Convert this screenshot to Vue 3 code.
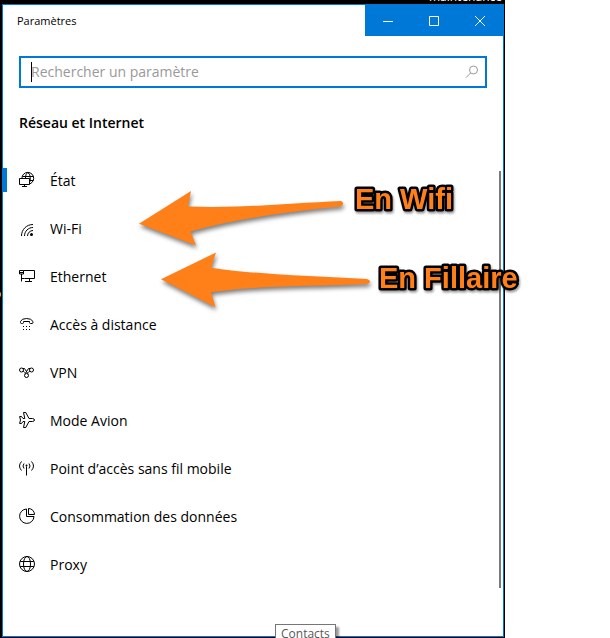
<script setup>
import { ref } from 'vue'

const query = ref('')
const current = ref('etat')
const items = [
  { id: 'etat', label: 'État' },
  { id: 'wifi', label: 'Wi-Fi' },
  { id: 'ethernet', label: 'Ethernet' },
  { id: 'dialup', label: 'Accès à distance' },
  { id: 'vpn', label: 'VPN' },
  { id: 'plane', label: 'Mode Avion' },
  { id: 'hotspot', label: 'Point d’accès sans fil mobile' },
  { id: 'usage', label: 'Consommation des données' },
  { id: 'proxy', label: 'Proxy' },
]
</script>

<template>
  <div class="screen">
    <div class="desktop">
      <span class="behind-top">maintenance</span>
      <span class="behind-left">o</span>
      <main class="window">
        <header class="titlebar">
          <span class="title">Paramètres</span>
          <div class="controls">
            <button type="button" aria-label="Réduire">
              <svg width="12" height="12" viewBox="0 0 12 12"><path d="M1 6.500h10" /></svg>
            </button>
            <button type="button" aria-label="Agrandir">
              <svg width="12" height="12" viewBox="0 0 12 12"><path d="M1.500 1.500h9v9h-9z" /></svg>
            </button>
            <button type="button" aria-label="Fermer">
              <svg width="12" height="12" viewBox="0 0 12 12"><path d="M1 1l10 10M11 1L1 11" /></svg>
            </button>
          </div>
        </header>

        <label class="search">
          <span class="caret"></span>
          <input v-model="query" type="text" placeholder="Rechercher un paramètre" aria-label="Rechercher un paramètre" />
          <svg width="14" height="14" viewBox="0 0 14 14"><circle cx="8.500" cy="5" r="4" /><path d="M5.600 8L1 12.600" /></svg>
        </label>

        <h1>Réseau et Internet</h1>

        <div class="pane">
          <nav>
            <a v-for="item in items" :key="item.id" href="#" :class="{ active: item.id === current }" @click.prevent="current = item.id">
              <svg class="icon" width="16" height="16" viewBox="0 0 16 16">
                <g v-if="item.id === 'etat'">
                  <circle cx="8.800" cy="6.300" r="5.900" />
                  <path d="M3.500 4.500h10.800M10.500 8.500h4M6.500 7V4.500Q6.800 2 8.800 .5q2 1.500 2.400 4V8q-.2 2.500-1.700 4" />
                  <path class="paper" d="M.5 6.500h10v6H.5z" />
                  <path d="M5.500 12.500v2M3 14.500h5" />
                </g>
                <g v-else-if="item.id === 'wifi'">
                  <path d="M2.500 16C2.500 9.500 7.500 4.500 14 4.500M5.500 16c0-4.700 3.800-8.500 8.500-8.500M8.500 16c0-3 2.500-5.500 5.500-5.500" />
                  <circle class="solid" cx="12.500" cy="14.500" r="1.500" />
                </g>
                <g v-else-if="item.id === 'ethernet'">
                  <path d="M4.500 2.500h11v8h-10M10.500 10.500v3M6 13.500h7M.5 2.500h4v3.500h-4zM1 4.500h3M2.500 6v7.500M2.500 10.500h3" />
                </g>
                <g v-else-if="item.id === 'dialup'">
                  <path d="M4.500 5.500h6v1q0 1 1 1h1.500q1 0 1-1V5.500Q12.500 2.500 7.500 2.500T1.500 5.500v1q0 1 1 1h1q1 0 1-1z" />
                  <path d="M4 10.500h1M7 10.500h1M10 10.500h1M4 13.500h1M7 13.500h1M10 13.500h1" />
                </g>
                <g v-else-if="item.id === 'vpn'">
                  <circle cx="2.500" cy="6" r="2" /><circle cx="12.500" cy="6" r="2" /><circle cx="7.500" cy="11.500" r="2" />
                  <path d="M4 4.500h1.500L9 9.800M11 4.500H9.500L6 9.800M4.300 7l1.200 1.500M10.700 7L9.500 8.500" />
                </g>
                <g v-else-if="item.id === 'plane'">
                  <path d="M4.500 .5h2.300L10 6.500h3.500q2 .3 2 1.500t-2 1.500H10l-3.200 6H4.500l1.300-6H4l-1.500 2H.6L1.500 8 .6 4.500h1.900l1.500 2h1.800z" />
                </g>
                <g v-else-if="item.id === 'hotspot'">
                  <path d="M7.500 6.500V15.500M2.500 1.500Q-1.500 6 2.500 10.500M12.500 1.500q4 4.500 0 9M5 3.500q-2 2.500 0 5M10 3.500q2 2.500 0 5" />
                  <circle class="solid" cx="7.500" cy="5.500" r="1" />
                </g>
                <g v-else-if="item.id === 'usage'">
                  <path d="M7.500 1A7.200 7.200 0 1 0 15 8.500H7.500zM9.500 .5v6h6A6 6 0 0 0 9.500 .5z" />
                </g>
                <g v-else>
                  <circle cx="8" cy="8" r="7.500" /><ellipse cx="8" cy="8" rx="3.500" ry="7.500" />
                  <path d="M1.200 5.500h13.600M1.200 10.500h13.600" />
                </g>
              </svg>
              <span class="label">{{ item.label }}</span>
            </a>
          </nav>
          <div class="scrollbar"></div>
        </div>
      </main>
    </div>

    <div class="tooltip" role="tooltip">Contacts</div>

    <svg class="notes" width="610" height="638" viewBox="0 0 610 638">
      <path d="M139 223.700L191 191l-3 15.500C240 208.500 295 203 341 201q2.500 1 2 3t-3 2.500C285 212 235 219 190.500 231.500l5.500 14z" />
      <path d="M161 279.300L216 252.500l-5 15.200C260 275 320 276.500 367 279q3 1 3 2.500t-3 2.500C315 286.500 260 285 211 292.300l4.500 15z" />
      <text x="355" y="209">En Wifi</text>
      <text x="379" y="288">En Fillaire</text>
    </svg>
  </div>
</template>

<style>
body {
  background: #fff;
}
</style>

<style scoped>
.screen {
  position: relative;
  display: flex;
  height: 100vh;
  overflow: hidden;
  font-family: "Open Sans", "Noto Sans", sans-serif;
  color: #000;
}
.desktop {
  position: relative;
  flex: 1;
  display: flex;
  margin-right: 105px;
  padding: 4px 1px 1px 2px;
  background: #000;
  overflow: hidden;
}
.behind-top {
  position: absolute;
  top: -11px;
  right: 3px;
  font-size: 12px;
  line-height: 16px;
  color: #fff;
}
.behind-left {
  position: absolute;
  top: 286px;
  left: -6px;
  font-size: 12px;
  line-height: 16px;
  color: #fff;
}
.window {
  position: relative;
  flex: 1;
  display: flex;
  flex-direction: column;
  border: 1px solid #0078d7;
  background: #fff;
}
.titlebar {
  display: flex;
  justify-content: space-between;
  height: 31px;
}
.title {
  padding-left: 14px;
  font-size: 11px;
  line-height: 32px;
}
.controls {
  display: flex;
}
.controls button {
  display: grid;
  place-items: center;
  width: 46px;
  padding: 0;
  border: 0;
  background: #0078d7;
}
.controls svg {
  fill: none;
  stroke: #fff;
}
.search {
  display: flex;
  align-items: center;
  box-sizing: border-box;
  height: 32px;
  margin: 20px 16px 0;
  padding: 0 6px 0 10px;
  border: 2px solid #0078d7;
}
.caret {
  width: 1px;
  height: 20px;
  margin-right: -1px;
  background: #000;
}
.search input {
  flex: 1;
  min-width: 0;
  padding: 0;
  border: 0;
  outline: 0;
  background: none;
  font: inherit;
  font-size: 14px;
  line-height: 20px;
}
.search input::placeholder {
  color: #999;
  opacity: 1;
}
.search svg {
  fill: none;
  stroke: #999;
}
h1 {
  margin: 25px 16px 0;
  font-size: 14px;
  line-height: 20px;
  font-weight: 600;
}
.pane {
  display: flex;
  margin-top: 23px;
}
nav {
  flex: 1;
}
nav a {
  display: flex;
  align-items: center;
  gap: 15px;
  height: 48px;
  padding-left: 16px;
  color: #000;
  font-size: 14px;
  line-height: 20px;
  text-decoration: none;
}
.label {
  padding-top: 2px;
}
nav a.active {
  padding-left: 12px;
}
nav a.active::before {
  content: "";
  width: 4px;
  height: 24px;
  margin: 0 -3px 0 -12px;
  background: #0078d7;
}
.icon {
  overflow: visible;
  fill: none;
  stroke: #000;
}
.icon .solid {
  fill: #000;
  stroke: none;
}
.icon .paper {
  fill: #fff;
}
.scrollbar {
  width: 2px;
  margin: 15px 2px 0 0;
  background: #7a7a7a;
}
.tooltip {
  position: absolute;
  left: 275px;
  bottom: -6px;
  padding: 1px 5px;
  border: 1px solid #767676;
  background: #fff;
  box-shadow: 3px 3px 2px rgba(0, 0, 0, 0.4);
  color: #575757;
  font-size: 12px;
  line-height: 16px;
}
.notes {
  position: absolute;
  top: 0;
  left: 0;
  pointer-events: none;
}
.notes path {
  fill: #ff8019;
  filter: drop-shadow(1px 3px 2px rgba(0, 0, 0, 0.5));
}
.notes text {
  fill: #ff8019;
  stroke: #000;
  stroke-width: 5px;
  stroke-linejoin: round;
  paint-order: stroke;
  font: bold 29px "Liberation Sans", Arial, sans-serif;
  filter: drop-shadow(1px 2px 1px rgba(0, 0, 0, 0.4));
}
</style>
